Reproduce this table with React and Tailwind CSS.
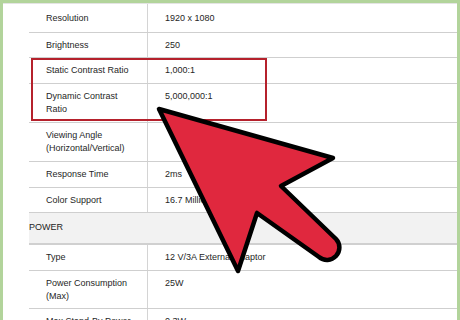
import React from "react"

const rows = [
  { label: "Resolution", value: "1920 x 1080", h: "h-[29px]", pt: "pt-[8px]" },
  { label: "Brightness", value: "250", h: "h-[25px]", pt: "pt-[6px]" },
  { label: "Static Contrast Ratio", value: "1,000:1", h: "h-[26px]", pt: "pt-[6px]" },
  { label: "Dynamic Contrast Ratio", value: "5,000,000:1", h: "h-[39px]", pt: "pt-[6px]" },
  { label: "Viewing Angle (Horizontal/Vertical)", value: "", h: "h-[39px]", pt: "pt-[6px]" },
  { label: "Response Time", value: "2ms", h: "h-[26px]", pt: "pt-[6px]" },
  { label: "Color Support", value: "16.7 Million Colors", h: "h-[25px]", pt: "pt-[6px]" },
  { section: "POWER" },
  { label: "Type", value: "12 V/3A External Adaptor", h: "h-[26px]", pt: "pt-[6px]" },
  { label: "Power Consumption (Max)", value: "25W", h: "h-[38px]", pt: "pt-[6px]" },
  { label: "Max Stand-By Power", value: "0.3W", h: "h-[38px]", pt: "pt-[6px]" },
]

function Arrow() {
  return (
    <svg className="absolute left-0 top-0" width="460" height="320" viewBox="0 0 460 320">
      <path
        d="M159 109 L333 158 L281 186 L336 239 A12.4 12.4 0 0 1 319 257 L257 213 L238 271 Z"
        fill="#e0283e"
        stroke="#000"
        strokeWidth="4.5"
        strokeLinejoin="round"
      />
    </svg>
  )
}

export default function App() {
  return (
    <div className="relative w-[460px] h-[320px] overflow-hidden bg-[#b2d49b] pt-[3px] px-[3px] font-['Liberation_Sans',Arial,sans-serif] text-[9px] text-[#262626]">
      <div className="h-full bg-white pl-[26px] border-t border-[#e4e4e4]">
        {rows.map((row, i) =>
          row.section ? (
            <div key={i} className="flex items-center h-[32px] bg-[#f2f2f2] border-b-2 border-[#d0d0d0] text-[#1e1e1e]">
              {row.section}
            </div>
          ) : (
            <div key={i} className={`flex border-b border-[#cfcfcf] ${row.h}`}>
              <div className={`w-[119px] shrink-0 border-r border-[#d4d4d4] pl-[17px] leading-[12.5px] ${row.pt}`}>
                <div className="w-[90px]">{row.label}</div>
              </div>
              <div className={`pl-[17px] leading-[12.5px] whitespace-nowrap ${row.pt}`}>{row.value}</div>
            </div>
          )
        )}
      </div>

      {/* highlight box */}
      <div className="absolute left-[31px] top-[58px] w-[236px] h-[63px] border-2 border-[#b5212c]" />

      <Arrow />
    </div>
  )
}
